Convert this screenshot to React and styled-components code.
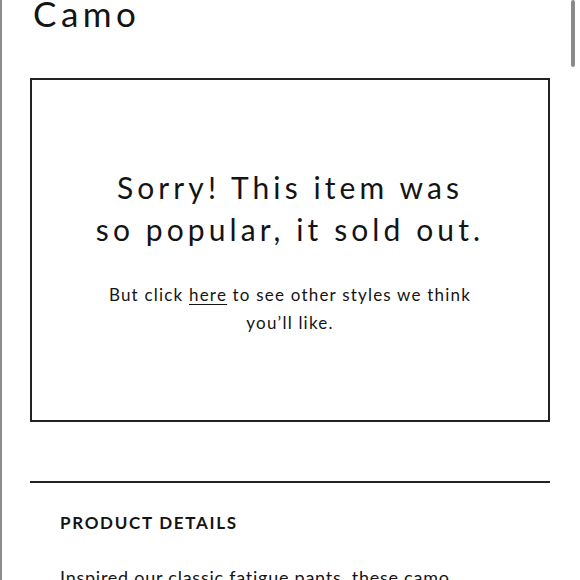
import React from "react";
import styled, { createGlobalStyle } from "styled-components";

const Global = createGlobalStyle`
  html, body { margin: 0; padding: 0; background: #fff; }
  body { font-family: Lato, "Open Sans", sans-serif; color: #141414; overflow: hidden; }
  * { box-sizing: border-box; }
`;

const Page = styled.div`
  min-height: 580px;
  border-left: 2px solid #8c8c8c;
  padding: 0 30px 0 28px;
`;

const ScrollThumb = styled.div`
  position: fixed;
  top: 0;
  right: 5px;
  width: 4px;
  height: 67px;
  border-radius: 2px;
  background: #8a8a8a;
`;

const Title = styled.h1`
  margin: -4px 0 0 3px;
  font-size: 35px;
  line-height: 35px;
  font-weight: 400;
  letter-spacing: 4.5px;
`;

const SoldOutBox = styled.section`
  margin-top: 47px;
  border: 2px solid #222;
  padding: 86px 20px 83px;
  display: flex;
  flex-direction: column;
  align-items: center;
  text-align: center;
`;

const Headline = styled.h2`
  margin: 0;
  font-size: 30px;
  line-height: 42px;
  font-weight: 400;
  letter-spacing: 4.1px;
`;

const Message = styled.p`
  margin: 31px 0 0;
  max-width: 390px;
  font-size: 17px;
  line-height: 28px;
  letter-spacing: 1.2px;
`;

const Link = styled.a`
  color: inherit;
  text-decoration: underline;
  text-underline-offset: 3px;
  text-decoration-thickness: 1px;
`;

const Divider = styled.hr`
  margin: 59px 0 0;
  border: 0;
  border-top: 2px solid #222;
`;

const Details = styled.section`
  padding: 30px 30px 0;
`;

const DetailsHeading = styled.h3`
  margin: 0;
  font-size: 17px;
  line-height: 20px;
  font-weight: 700;
  letter-spacing: 1.7px;
`;

const DetailsText = styled.p`
  margin: 30px 0 0;
  max-width: 440px;
  font-size: 18px;
  line-height: 28px;
  letter-spacing: 0.75px;
`;

export default function App() {
  return (
    <>
      <Global />
      <Page>
        <Title>Camo</Title>
        <SoldOutBox>
          <Headline>
            Sorry! This item was
            <br />
            so popular, it sold out.
          </Headline>
          <Message>
            But click <Link href="#">here</Link> to see other styles we think
            you’ll like.
          </Message>
        </SoldOutBox>
        <Divider />
        <Details>
          <DetailsHeading>PRODUCT DETAILS</DetailsHeading>
          <DetailsText>
            Inspired our classic fatigue pants, these camo shorts are made
            from soft, durable cotton twill.
          </DetailsText>
        </Details>
      </Page>
      <ScrollThumb />
    </>
  );
}
